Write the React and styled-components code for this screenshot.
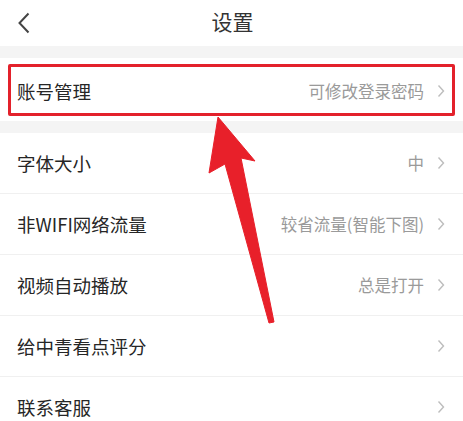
import React from 'react';
import styled, { createGlobalStyle } from 'styled-components';

const Global = createGlobalStyle`
  html, body {
    margin: 0;
    padding: 0;
    background: #ffffff;
  }
  body {
    font-family: "Noto Sans CJK SC", "Noto Sans", sans-serif;
  }
`;

const Page = styled.div`
  position: relative;
  width: 463px;
  height: 421px;
  overflow: hidden;
  background: #ffffff;
`;

const Header = styled.div`
  height: 46px;
  display: flex;
  align-items: center;
  justify-content: center;
  position: relative;
`;

const Back = styled.div`
  position: absolute;
  left: 14px;
  top: 11px;
  width: 20px;
  height: 24px;
  display: flex;
  align-items: center;
  justify-content: center;
`;

const Title = styled.div`
  font-size: 21px;
  color: #333333;
  line-height: 1;
  padding: 0 0 3px 2px;
`;

const Gap = styled.div`
  height: 12px;
  background: #f4f4f4;
`;

const Group = styled.div`
  background: #ffffff;
`;

const Row = styled.div`
  position: relative;
  height: 60px;
  display: flex;
  align-items: center;
  padding: 0 18px 0 17px;
  ${(p) => (p.$divider ? 'border-bottom: 1px solid #f0f0f0;' : '')}
  ${(p) => (p.$shift ? `padding-top: ${p.$shift}px;` : '')}
`;

const Label = styled.div`
  flex: 1;
  font-size: 18.5px;
  color: #262626;
  line-height: 1;
`;

const Value = styled.div`
  font-size: 16.5px;
  color: #9a9a9a;
  line-height: 1;
  margin-right: 13px;
`;

const Highlight = styled.div`
  position: absolute;
  left: 8px;
  right: 8px;
  top: 6px;
  bottom: 5px;
  border: 3px solid #e3212b;
  border-radius: 2px;
  pointer-events: none;
`;

const Arrow = styled.svg`
  position: absolute;
  left: 0;
  top: 0;
  pointer-events: none;
`;

const Chevron = () => (
  <svg width="8" height="14" viewBox="0 0 8 14">
    <path d="M1.5 1.5 L6.5 7 L1.5 12.5" fill="none" stroke="#bdbdbd" strokeWidth="1.4" />
  </svg>
);

const rows = [
  { label: '字体大小', value: '中' },
  { label: '非WIFI网络流量', value: '较省流量(智能下图)' },
  { label: '视频自动播放', value: '总是打开' },
  { label: '给中青看点评分', value: '' },
  { label: '联系客服', value: '' },
];

export default function App() {
  return (
    <Page>
      <Global />
      <Header>
        <Back>
          <svg width="14" height="22" viewBox="0 0 14 22">
            <path d="M11.5 1.5 L2.5 11 L11.5 20.5" fill="none" stroke="#444444" strokeWidth="2" />
          </svg>
        </Back>
        <Title>设置</Title>
      </Header>
      <Gap />
      <Group>
        <Row $shift={3}>
          <Label>账号管理</Label>
          <Value>可修改登录密码</Value>
          <Chevron />
          <Highlight />
        </Row>
      </Group>
      <Gap />
      <Group>
        {rows.map((r, i) => (
          <Row key={r.label} $divider={i < rows.length - 1}>
            <Label>{r.label}</Label>
            {r.value && <Value>{r.value}</Value>}
            <Chevron />
          </Row>
        ))}
      </Group>
      <Arrow width="463" height="421" viewBox="0 0 463 421">
        <polygon
          points="218,117 255,161 241,158 274,322 269,323 225,164 209,173"
          fill="#e8202a"
          stroke="#e8202a"
          strokeWidth="1"
          strokeLinejoin="round"
        />
      </Arrow>
    </Page>
  );
}
